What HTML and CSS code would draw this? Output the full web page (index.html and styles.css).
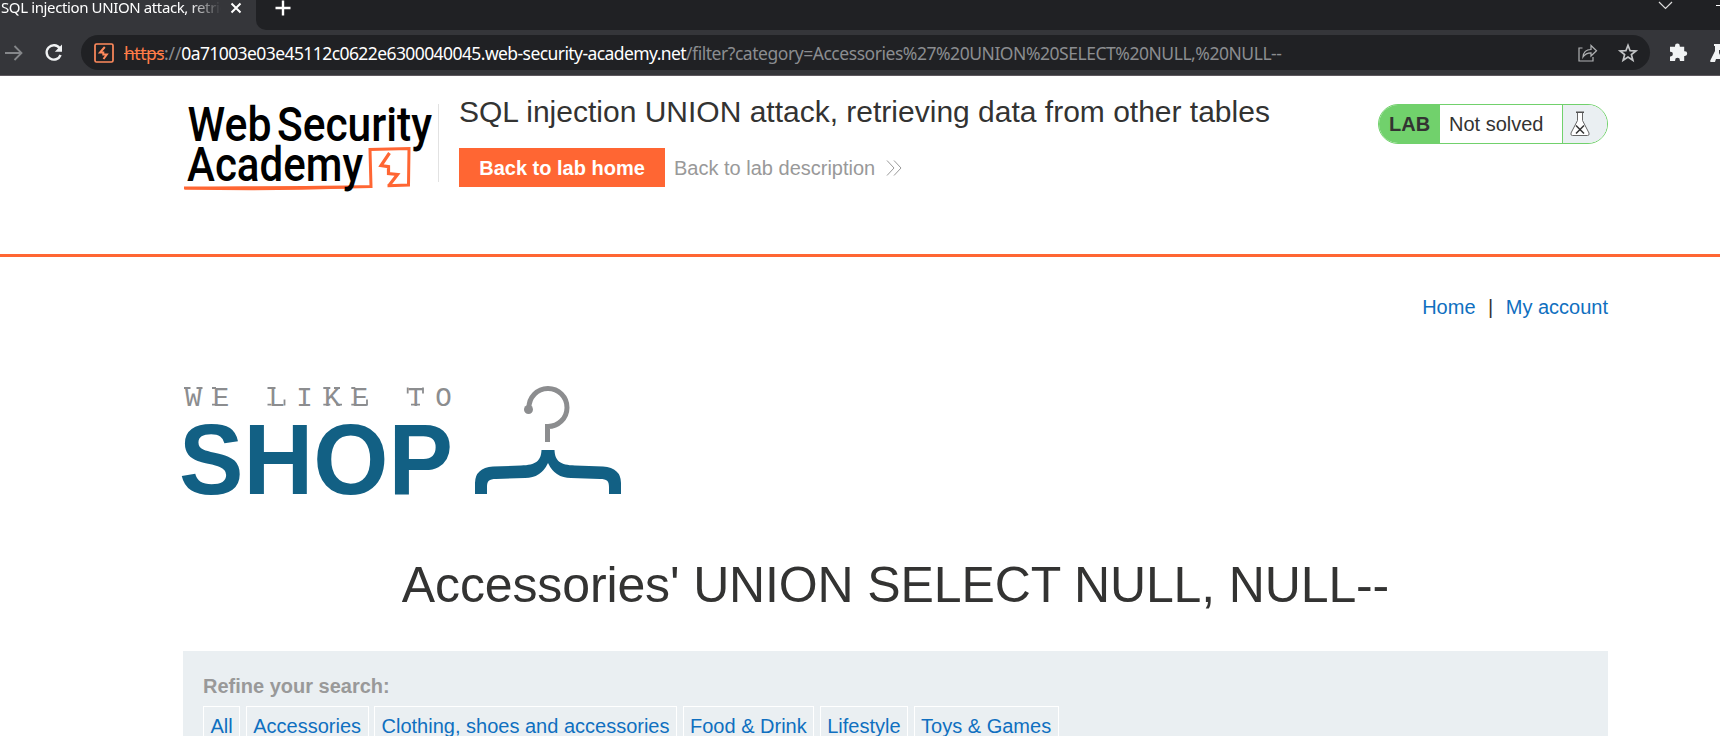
FILE: index.html
```html
<!DOCTYPE html>
<html lang="en">
<head>
<meta charset="utf-8">
<title>SQL injection UNION attack, retrieving data from other tables</title>
<link rel="stylesheet" href="styles.css">
</head>
<body>
<div class="browser">
  <div class="tabstrip">
    <div class="tab">
      <span class="tab-title">SQL injection UNION attack, retrieving</span>
      <svg class="tab-close" width="12" height="12" viewBox="0 0 12 12"><path d="M1.5 1.5l9 9M10.500 1.500l-9 9" stroke="#fff" stroke-width="2"/></svg>
    </div>
    <div class="strip-rest">
      <svg class="new-tab" width="16" height="16" viewBox="0 0 16 16"><path d="M8 .5v15M.5 8h15" stroke="#fff" stroke-width="2.4"/></svg>
      <svg class="window-controls" width="62" height="12" viewBox="0 0 62 12"><path d="M1 2l6.500 6.500L14 2" fill="none" stroke="#ddd" stroke-width="1.2"/><path d="M58 5.500h4" stroke="#fff"/></svg>
    </div>
  </div>
  <div class="toolbar">
    <svg class="forward" width="18" height="18" viewBox="0 0 18 18"><path d="M0 9h16M9.500 2l7 7-7 7" fill="none" stroke="#85878a" stroke-width="1.800"/></svg>
    <svg class="reload" width="20" height="20" viewBox="0 0 20 20"><path d="M15.700 5.200A7.200 7.200 0 1 0 16.600 12" fill="none" stroke="#f1f3f4" stroke-width="2.400"/><path d="M18 1.500v7.200h-7.200z" fill="#f1f3f4"/></svg>
    <div class="omnibox">
      <svg class="site" width="20" height="20" viewBox="0 0 20 20"><rect x="1" y="1" width="18" height="18" rx="1.500" fill="none" stroke="#ff8a5c" stroke-width="1.700"/><path d="M10.800 4L6 9.500h3.300v2h3.500L9.500 16" fill="none" stroke="#ff8a5c" stroke-width="2"/></svg>
      <div class="url"><span class="scheme">https</span><span class="slashes">://</span><span class="host">0a71003e03e45112c0622e6300040045.web-security-academy.net</span><span class="path">/filter?category=Accessories%27%20UNION%20SELECT%20NULL,%20NULL--</span></div>
      <svg class="share" width="20" height="20" viewBox="0 0 20 20"><path d="M4.500 5H1v13h14v-4M5 14c.4-5 3.500-7.500 8-7.500V2.500l5.500 5.300-5.500 5.200V9.800C9.500 9.800 7 11 5 14z" fill="none" stroke="#b0b2b4" stroke-width="1.200"/></svg>
      <svg class="star" width="20" height="20" viewBox="0 0 20 20"><path d="M10 2.300l2.100 5.400 5.800.3-4.500 3.600 1.500 5.700-4.900-3.200-4.900 3.200 1.500-5.700L2.100 8l5.800-.3z" fill="none" stroke="#c3c5c7" stroke-width="1.700"/></svg>
    </div>
    <svg class="puzzle" width="19" height="19" viewBox="0 0 19 19"><path d="M1 3.800h5V3a2.400 2.400 0 0 1 4.800 0v.8h4.400v4.500h.7a2.300 2.300 0 0 1 0 4.600h-.7V18h-4.300v-.8a2.400 2.400 0 0 0-4.800 0v.8H1v-4.600h.6a2.300 2.300 0 0 0 0-4.600H1z" fill="#f1f3f4"/></svg>
    <svg class="flask-ext" width="10" height="18" viewBox="0 0 10 18"><path d="M4 0h6v6H9v3l1 2v4H6l-1 3H1c-1 0-1-1-.5-2L5 7V2H4z" fill="#f1f3f4"/></svg>
  </div>
</div>

<header class="lab-header">
  <div class="container header-row">
    <svg class="academy-logo" width="250" height="92" viewBox="0 0 250 92">
      <g class="academy-type">
        <text x="4.500" y="39.500" textLength="84" lengthAdjust="spacingAndGlyphs">Web</text>
        <text x="94" y="39.500" textLength="155" lengthAdjust="spacingAndGlyphs">Security</text>
      </g>
      <path d="M1 87c60-.5 120 0 187-1.500l-1-37 39-1-.5 36.500-21 .8" fill="none" stroke="#ff6633" stroke-width="3"/>
      <path d="M2 87.500c50 1.200 110 1 165-1" fill="none" stroke="#ff6633" stroke-width="2"/>
      <path d="M206.500 52l-8.500 12.500 7.500 1.200v6.800l9 1-8.500 11" fill="none" stroke="#ff6633" stroke-width="3.200"/>
      <text class="academy-type" x="4" y="80.300" textLength="176" lengthAdjust="spacingAndGlyphs">Academy</text>
    </svg>
    <div class="title-block">
      <h2>SQL injection UNION attack, retrieving data from other tables</h2>
      <div class="actions">
        <a class="button">Back to lab home</a>
        <a class="back-link">Back to lab description
          <svg width="16" height="16" viewBox="0 0 16 16"><path d="M1 .5L8 8l-7 7.500M8 .5L15 8l-7 7.500" fill="none" stroke="#999" stroke-width="1"/></svg></a>
      </div>
    </div>
    <div class="lab-status">
      <span class="lab-tag">LAB</span>
      <span class="lab-state">Not solved</span>
      <span class="lab-icon"><svg width="20" height="26" viewBox="0 0 20 26"><path d="M7.500 1.500v8L1 22q-.7 2.500 1.500 2.500h15Q19.700 24.500 19 22L12.500 9.500v-8z" fill="#fff" stroke="#666" stroke-width="1"/><path d="M6 1.200h8" stroke="#555" stroke-width="1.500"/><path d="M6 14.500l8 8M14 14.500l-8 8" stroke="#333" stroke-width="1.500"/></svg></span>
    </div>
  </div>
</header>

<main class="container">
  <nav class="account-nav"><a>Home</a><span>|</span><a>My account</a></nav>
  <svg class="shop-logo" width="440" height="112" viewBox="0 0 440 112">
    <text class="tagline" x="2" y="19.500">WE LIKE TO</text>
    <path class="slabs" d="M1 2h6.500M13.500 2h6M29 2h4M29 18.700h4M84.500 2h8M84.500 18.700h4M101.500 19.500v-6M140.300 2h7M151 2h6M140.300 18.700h7M153 18.700h6M168.300 2h4M168.300 18.700h4M184 13.500v6M224.700 1.500v6M240 1.500v6M228 18.700h9"/>
    <text class="shop" x="-4" y="108.300" textLength="274" lengthAdjust="spacingAndGlyphs">SHOP</text>
    <path d="M346 22A19 19 0 1 1 364.500 40.500V56" fill="none" stroke="#8c8d8f" stroke-width="5"/>
    <circle cx="345.500" cy="23.500" r="4.500" fill="#8c8d8f"/>
    <path d="M292 108V97Q292 82 310 80.500L338 79.500C353 79 358 75 358.500 64H371.500C372 75 377 79 392 79.500L420 80.500Q438 82 438 97V108H426V101C426 95 424 93 417 93L388 92Q372 92 365 77Q358 92 342 92L313 93C306 93 304 95 304 101V108Z" fill="#126084"/>
  </svg>
  <h1>Accessories' UNION SELECT NULL, NULL--</h1>
  <section class="filters">
    <div class="filters-label">Refine your search:</div>
    <div class="filter-list"><a>All</a><a>Accessories</a><a>Clothing, shoes and accessories</a><a>Food &amp; Drink</a><a>Lifestyle</a><a>Toys &amp; Games</a></div>
  </section>
</main>
</body>
</html>
```
FILE: styles.css
```css
* { box-sizing: border-box; }
body {
  margin: 0;
  height: 736px;
  overflow: hidden;
  background: #fff;
  color: #333332;
  font: 20px/24px "Liberation Sans", Arial, sans-serif;
}
svg { display: block; flex: none; overflow: visible; }
a { color: #0f6fc0; text-decoration: none; white-space: nowrap; }

.browser {
  height: 76px;
  background: #35363a;
  border-bottom: 1px solid #5d585e;
  overflow: hidden;
  font-family: "Noto Sans", sans-serif;
}
.tabstrip { display: flex; height: 30px; }
.tab { display: flex; width: 256px; flex: none; }
.tab-title {
  width: 220px;
  margin: -5px 0 0 1px;
  overflow: hidden;
  white-space: nowrap;
  color: #fff;
  font-size: 15px;
  letter-spacing: -0.38px;
  -webkit-mask-image: linear-gradient(90deg, #000 188px, transparent 220px);
  mask-image: linear-gradient(90deg, #000 188px, transparent 220px);
}
.tab-close { margin: 2px 0 0 9px; }
.strip-rest {
  display: flex;
  flex: 1;
  justify-content: space-between;
  padding-left: 19px;
  background: #202124;
  border-bottom-left-radius: 10px;
}
.toolbar { display: flex; align-items: center; height: 45px; padding-left: 5px; }
.reload { margin-left: 21px; }
.omnibox {
  display: flex;
  align-items: center;
  width: 1570px;
  height: 35px;
  margin-left: 17px;
  padding: 0 12px 0 13px;
  border-radius: 18px;
  background: #202124;
}
.url {
  flex: 1;
  margin-left: 10px;
  white-space: nowrap;
  font-size: 17.5px;
  color: #8b8d90;
}
.scheme { color: #ff7c48; text-decoration: line-through; letter-spacing: -0.5px; }
.slashes { letter-spacing: -0.2px; }
.host { color: #fff; letter-spacing: -0.58px; }
.path { letter-spacing: -0.46px; }
.share { margin-right: 20px; }
.puzzle { margin-left: 19px; }
.flask-ext { margin-left: 22px; }

.container { width: 1425px; margin-left: 183px; }
.lab-header { height: 181px; border-bottom: 3px solid #ff6633; }
.header-row { display: flex; align-items: flex-start; }
.academy-logo { margin-top: 25px; }
.academy-type { font: 500 48px Roboto, sans-serif; fill: #000; }
.title-block {
  height: 78px;
  margin: 28px 0 0 5px;
  padding-left: 20px;
  border-left: 1px solid #e2e2e2;
  flex: 1;
}
h2 { margin: -9px 0 0; font-size: 30px; font-weight: 400; line-height: 34px; white-space: nowrap; }
.actions { display: flex; align-items: center; margin-top: 19px; gap: 9px; }
.button {
  width: 206px;
  height: 39px;
  padding-top: 1px;
  background: #ff6633;
  color: #fff;
  font-weight: 700;
  line-height: 39px;
  text-align: center;
}
.back-link { display: flex; align-items: center; gap: 11px; color: #999; }
.lab-status {
  display: flex;
  width: 230px;
  height: 40px;
  margin-top: 28px;
  overflow: hidden;
  border: 1px solid #71d16c;
  border-radius: 20px;
  line-height: 38px;
}
.lab-tag { width: 61px; padding-left: 10px; background: #71d16c; font-weight: 700; }
.lab-state { width: 123px; padding-left: 9px; border-right: 1px solid #71d16c; }
.lab-icon { flex: 1; padding: 6px 0 0 7px; background: #eaeff2; }

.account-nav { display: flex; justify-content: flex-end; gap: 12.5px; padding-top: 38px; }
.shop-logo { margin-top: 67px; }
.tagline { font: 27.5px "Liberation Mono", monospace; letter-spacing: 11.3px; fill: #8c8d8f; }
.slabs { fill: none; stroke: #8c8d8f; stroke-width: 1.8px; }
.shop { font: 700 101px "Liberation Sans", sans-serif; fill: #126084; }
h1 { margin: 60px 0 0; font-size: 50px; font-weight: 400; line-height: 54px; letter-spacing: -0.13px; text-align: center; }
.filters { height: 120px; margin-top: 39px; padding: 23px 20px 0; background: #eaeff2; }
.filters-label { color: #999; font-weight: 700; }
.filter-list { display: flex; gap: 5.5px; margin-top: 8px; }
.filter-list a { height: 40px; padding: 7px 6.5px; border: 1px solid #fff; }
```
